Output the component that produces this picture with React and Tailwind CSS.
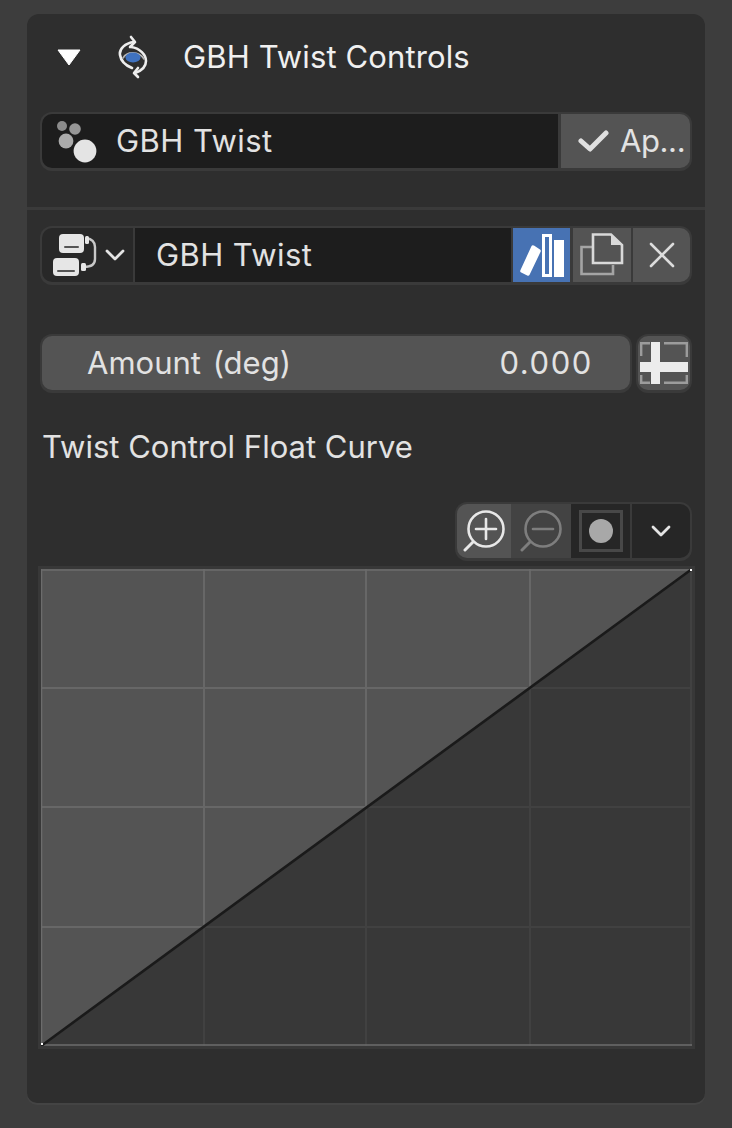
const F = { fontFamily: 'Inter, "Liberation Sans", sans-serif' };

function Twist() {
  return (
    <svg width="30" height="44" viewBox="0 0 30 44" fill="none" stroke="#ededed" strokeWidth="2.6" strokeLinecap="round" strokeLinejoin="round">
      <path d="M16 7 C7 8 1 14 2 20 C3 27 9 31 14 33" />
      <path d="M13 2 L17 7 L12 12" />
      <path d="M13 12 C22 13 28 20 28 26 C28 32 23 36 17 38" />
      <path d="M20 33 L16 38 L20 42" />
      <path d="M5 23 C9 16 21 16 26 24" strokeWidth="1.6" stroke="#b5b5b5" />
      <ellipse cx="15" cy="22.5" rx="7.5" ry="5" fill="#3f72c0" stroke="none" />
    </svg>
  );
}

function Dots() {
  return (
    <svg width="46" height="46" viewBox="0 0 46 46">
      <circle cx="10" cy="8" r="5" fill="#8c8c8c" />
      <circle cx="23" cy="11" r="5.8" fill="#979797" />
      <circle cx="14" cy="23" r="7.4" fill="#ababab" />
      <circle cx="33" cy="33" r="11.4" fill="#e4e4e4" />
    </svg>
  );
}

function Check() {
  return (
    <svg width="32" height="24" viewBox="0 0 32 24" fill="none" stroke="#e0e0e0" strokeWidth="5" strokeLinecap="round" strokeLinejoin="round">
      <path d="M3 12 L12 20 L28 4" />
    </svg>
  );
}

function NodeIcon() {
  return (
    <svg width="46" height="44" viewBox="0 0 46 44">
      <rect x="6" y="1" width="25" height="19" rx="4" fill="#e6e6e6" />
      <rect x="11" y="13" width="15" height="2" rx="1" fill="#555555" />
      <rect x="0" y="25" width="26" height="18" rx="4" fill="#e6e6e6" />
      <rect x="4" y="37" width="18" height="2" rx="1" fill="#555555" />
      <path d="M33 5 C39 6 42 9 42 14 L42 26 C42 31 38 34 31 34" fill="none" stroke="#c8c8c8" strokeWidth="2.4" />
      <rect x="32" y="3" width="4" height="8" rx="1.5" fill="#e6e6e6" />
      <rect x="28" y="30" width="5" height="8" rx="1.5" fill="#e6e6e6" />
    </svg>
  );
}

function Chevron({ w = 20, c = "#e4e4e4" }) {
  return (
    <svg width={w} height="12" viewBox="0 0 20 12" fill="none" stroke={c} strokeWidth="2.8" strokeLinecap="round" strokeLinejoin="round">
      <path d="M2 2 L10 10 L18 2" />
    </svg>
  );
}

function Books() {
  return (
    <svg width="46" height="44" viewBox="0 0 46 44" fill="#fff">
      <path d="M14 14 L20 18 L9 41 L3 38 Z" stroke="#fff" strokeWidth="3.5" strokeLinejoin="round" />
      <path fillRule="evenodd" d="M23 1 H33 V44 H23 Z M26 4 V41 H30 V4 Z" />
      <rect x="35" y="7" width="10" height="37" />
    </svg>
  );
}

function Copy() {
  return (
    <svg width="44" height="44" viewBox="0 0 44 44" fill="none">
      <path d="M12 14 H1.5 V41 H33 V32" stroke="#a5a5a5" strokeWidth="2.6" />
      <path d="M13 30 V1.5 H31 L42 12 V30 Z" stroke="#d9d9d9" strokeWidth="2.6" />
      <path d="M31 1 L42 12 H31 Z" fill="#d9d9d9" />
    </svg>
  );
}

function Close() {
  return (
    <svg width="26" height="26" viewBox="0 0 26 26" stroke="#dcdcdc" strokeWidth="2.6" strokeLinecap="round">
      <path d="M2 2 L24 24 M24 2 L2 24" />
    </svg>
  );
}

function Reset() {
  return (
    <svg width="48" height="42" viewBox="0 0 48 42">
      <g fill="none" stroke="#9c9c9c" strokeWidth="2.4">
        <path d="M1.2 14 V1.2 H10 M24 1.2 H46.8 V15 M46.8 33 V40.8 H24 M10 40.8 H1.2 V33" />
      </g>
      <rect x="11" y="0" width="9" height="42" fill="#ececec" />
      <rect x="0" y="20" width="48" height="10" fill="#ececec" />
    </svg>
  );
}

function Zoom({ plus, c }) {
  return (
    <svg width="42" height="42" viewBox="0 0 42 42" fill="none" stroke={c} strokeLinecap="round">
      <circle cx="23" cy="19" r="17.5" strokeWidth="2.6" />
      <path d="M10 32 L2 40" strokeWidth="3" />
      <path d="M13 19 H33" strokeWidth="2.6" />
      {plus && <path d="M23 9 V29" strokeWidth="2.6" />}
    </svg>
  );
}

function Handles() {
  return (
    <svg width="44" height="44" viewBox="0 0 44 44">
      <rect x="1.5" y="2.5" width="41" height="39" fill="none" stroke="#484848" strokeWidth="3" />
      <circle cx="22" cy="22" r="12" fill="#a8a8a8" />
    </svg>
  );
}

function Graph() {
  const W = 651;
  const H = 477;
  return (
    <svg width={W} height={H} viewBox={`0 0 ${W} ${H}`} className="block">
      <rect width={W} height={H} fill="#383838" />
      <path d={`M0 ${H} L${W} 0 L0 0 Z`} fill="#545454" />
      <defs>
        <clipPath id="up"><path d={`M0 ${H} L${W} 0 L0 0 Z`} /></clipPath>
      </defs>
      <g stroke="#414141" strokeWidth="2">
        <path d="M163 0 V477 M325 0 V477 M489 0 V477 M0 119 H651 M0 238 H651 M0 358 H651" />
        <path d="M650 0 V477" />
      </g>
      <g stroke="#676767" strokeWidth="2" clipPath="url(#up)">
        <path d="M163 0 V477 M325 0 V477 M489 0 V477 M0 119 H651 M0 238 H651 M0 358 H651" />
      </g>
      <path d="M0 1 H651 M0.5 0 V477 M0 476 H651" stroke="#6c6c6c" strokeWidth="1.5" fill="none" />
      <path d="M0 477 L651 0" stroke="#1a1a1a" strokeWidth="2.6" />
      <rect x="0" y="474" width="2" height="2" fill="#fff" />
      <rect x="649" y="0" width="2" height="2" fill="#fff" />
    </svg>
  );
}

export default function App() {
  return (
    <div className="w-[732px] h-[1128px] bg-[#3d3d3d] pt-[14px] pl-[27px] overflow-hidden text-[#e2e2e2]" style={F}>
      <div className="w-[678px] h-[1089px] bg-[#2e2e2e] rounded-t-[12px] rounded-b-[10px] shadow-[0_2px_0_0_#444444]">
        {/* header */}
        <div className="flex items-center h-[86px] pl-[30px]">
          <svg width="24" height="17" viewBox="0 0 24 17" className="shrink-0">
            <path d="M1 1 H23 L12 16 Z" fill="#fff" stroke="#fff" strokeLinejoin="round" />
          </svg>
          <div className="ml-[37px] mr-[35px] flex"><Twist /></div>
          <span className="text-[31px] leading-none text-[#f0f0f0] tracking-[0.12px] pb-[2px]">GBH Twist Controls</span>
        </div>

        {/* row 1 */}
        <div className="flex h-[59px] mt-[12px] ml-[13px] w-[652px] rounded-[12px] bg-[#3a3a3a] p-[2px] pb-[3px]">
          <div className="w-[516px] bg-[#1d1d1d] rounded-l-[10px] flex items-center pl-[10px]">
            <Dots />
            <span className="ml-[18px] text-[31px] leading-none tracking-[0.45px] pb-[2px]">GBH Twist</span>
          </div>
          <div className="ml-[3px] flex-1 bg-[#545454] rounded-r-[10px] flex items-center pl-[17px]">
            <Check />
            <span className="ml-[10px] text-[31px] leading-none tracking-[-0.4px] pb-[2px]">Ap...</span>
          </div>
        </div>

        <div className="mt-[36px] h-[3px] bg-[#3a3a3a]" />

        {/* row 2 */}
        <div className="flex h-[59px] mt-[16px] ml-[13px] w-[652px] rounded-[12px] bg-[#3a3a3a] p-[2px] pb-[3px]">
          <div className="w-[91px] bg-[#282828] rounded-l-[10px] flex items-center pl-[11px]">
            <NodeIcon />
            <span className="ml-[6px]"><Chevron /></span>
          </div>
          <div className="ml-[2px] w-[376px] bg-[#1d1d1d] flex items-center pl-[21px]">
            <span className="text-[31px] leading-none tracking-[0.4px] pb-[2px]">GBH Twist</span>
          </div>
          <div className="ml-[2px] w-[57px] bg-[#4772b3] flex items-center justify-center"><Books /></div>
          <div className="ml-[3px] w-[58px] bg-[#545454] flex items-center justify-center"><Copy /></div>
          <div className="ml-[2px] flex-1 bg-[#545454] rounded-r-[10px] flex items-center justify-center"><Close /></div>
        </div>

        {/* row 3 */}
        <div className="flex h-[59px] mt-[49px] ml-[13px] w-[652px] gap-[4px]">
          <div className="w-[592px] rounded-[12px] bg-[#3a3a3a] p-[2px] pb-[3px]">
            <div className="h-full bg-[#545454] rounded-[10px] flex items-center justify-between pl-[45px] pr-[37px] text-[31px] leading-none">
              <span className="pb-[2px] [word-spacing:3px]">Amount (deg)</span>
              <span className="pb-[2px] tracking-[1.6px]">0.000</span>
            </div>
          </div>
          <div className="flex-1 rounded-[12px] bg-[#3a3a3a] p-[2px] pb-[3px]">
            <div className="h-full bg-[#545454] rounded-[10px] flex items-center justify-center"><Reset /></div>
          </div>
        </div>

        {/* label */}
        <div className="mt-[38px] ml-[15px] text-[31px] leading-none text-[#e2e2e2]">Twist Control Float Curve</div>

        {/* toolbar */}
        <div className="flex justify-end mt-[40px] mr-[13px]">
          <div className="flex h-[59px] w-[237px] rounded-[12px] bg-[#3a3a3a] p-[2px] pb-[3px]">
            <div className="w-[54px] bg-[#545454] rounded-l-[10px] flex items-center justify-center"><Zoom plus c="#e8e8e8" /></div>
            <div className="w-[60px] bg-[#434343] flex items-center justify-center"><Zoom c="#7e7e7e" /></div>
            <div className="w-[59px] bg-[#262626] flex items-center justify-center"><Handles /></div>
            <div className="ml-[2px] flex-1 bg-[#262626] rounded-r-[10px] flex items-center justify-center"><Chevron /></div>
          </div>
        </div>

        {/* graph */}
        <div className="mt-[5px] ml-[11px] w-fit p-[3px] bg-[#383838]"><Graph /></div>
      </div>
    </div>
  );
}
